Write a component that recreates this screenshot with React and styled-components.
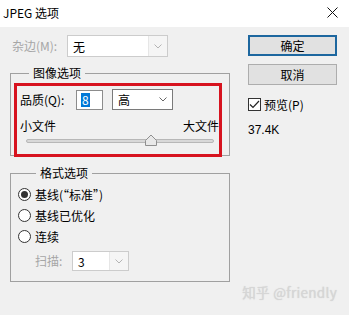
import React from "react";
import styled, { createGlobalStyle } from "styled-components";

const GlobalStyle = createGlobalStyle`
  html, body { margin: 0; padding: 0; background: #f0f0f0; }
  body { font-family: "Noto Sans CJK SC", "Noto Sans", sans-serif; font-size: 12px; color: #000; }
`;

const Window = styled.div`
  position: relative;
  width: 349px;
  height: 315px;
  background: #f0f0f0;
  overflow: hidden;
`;

const TitleBar = styled.div`
  height: 27px;
  background: #ffffff;
  display: flex;
  align-items: center;
  justify-content: space-between;
  padding: 0 11px 2px 3px;
  box-sizing: border-box;
  font-size: 12px;
`;

const Body = styled.div`
  display: flex;
  gap: 18px;
  padding: 8px 0 0 10px;
`;

const LeftCol = styled.div`
  width: 220px;
  display: flex;
  flex-direction: column;
`;

const RightCol = styled.div`
  width: 89px;
  display: flex;
  flex-direction: column;
`;

const Row = styled.div`
  display: flex;
  align-items: center;
  height: ${(p) => p.h || 21}px;
  margin-top: ${(p) => p.mt || 0}px;
  padding-left: ${(p) => p.pl || 0}px;
`;

const Label = styled.span`
  width: ${(p) => (p.w ? `${p.w}px` : "auto")};
  color: ${(p) => (p.disabled ? "#a6a6a6" : "#000")};
  line-height: 16px;
  white-space: nowrap;
`;

const Combo = styled.div`
  display: flex;
  width: ${(p) => p.w}px;
  height: ${(p) => p.h}px;
  box-sizing: border-box;
  border: 1px solid ${(p) => (p.disabled ? "#cccccc" : "#7a7a7a")};
  background: #ffffff;
  margin-left: ${(p) => p.ml || 0}px;
`;

const ComboField = styled.div`
  flex: 1;
  display: flex;
  align-items: center;
  padding-left: 5px;
  background: #ffffff;
  border-right: ${(p) => (p.disabled ? "1px solid #e6e6e6" : "none")};
`;

const ComboArrow = styled.div`
  width: 18px;
  display: flex;
  align-items: center;
  justify-content: center;
  background: ${(p) => (p.disabled ? "#f5f5f5" : "#ffffff")};
`;

const Chevron = ({ color }) => (
  <svg width="8" height="5" viewBox="0 0 8 5">
    <polyline points="0.5,0.5 4,4 7.5,0.5" fill="none" stroke={color} strokeWidth="1" />
  </svg>
);

const Select = ({ w, h, value, disabled, ml }) => (
  <Combo w={w} h={h} disabled={disabled} ml={ml}>
    <ComboField disabled={disabled}>{value}</ComboField>
    <ComboArrow disabled={disabled}>
      <Chevron color={disabled ? "#b4b4b4" : "#666"} />
    </ComboArrow>
  </Combo>
);

const Group = styled.fieldset`
  margin: ${(p) => p.mt || 0}px 0 0 0;
  padding: ${(p) => p.pad};
  border: 1px solid #a0a0a0;
  min-width: 0;
`;

const Legend = styled.legend`
  margin-left: 18px;
  padding: 0 4px;
  line-height: 16px;
  font-size: 12px;
`;

const RedFrame = styled.div`
  margin: 2px 7px -2px 3px;
  border: 3px solid #d7131f;
  padding: 3px 0 6px 3px;
  display: flex;
  flex-direction: column;
`;

const NumberBox = styled.div`
  width: 27px;
  height: 20px;
  box-sizing: border-box;
  border: 1px solid #8c8c8c;
  background: #fff;
  display: flex;
  align-items: center;
  padding-left: 4px;
`;

const Selected = styled.span`
  background: #0078d7;
  color: #fff;
  line-height: 14px;
  padding: 0 1px;
`;

const ScaleLabels = styled.div`
  display: flex;
  justify-content: space-between;
  line-height: 16px;
  margin-top: 8px;
`;

const Slider = styled.div`
  position: relative;
  height: 14px;
  margin: 0 5px 0 6px;
`;

const Track = styled.div`
  position: absolute;
  left: 0;
  right: 0;
  top: 5px;
  height: 4px;
  box-sizing: border-box;
  border: 1px solid #b7b7b7;
  background: #d8d8d8;
  border-radius: 2px;
`;

const Thumb = styled.svg`
  position: absolute;
  top: 0;
  margin-left: -6px;
`;

const RadioRow = styled.div`
  display: flex;
  align-items: center;
  height: 21px;
  gap: 4px;
`;

const RadioCircle = styled.span`
  width: 13px;
  height: 13px;
  box-sizing: border-box;
  border: 1px solid #333;
  border-radius: 50%;
  background: #fff;
  display: flex;
  align-items: center;
  justify-content: center;
  &::after {
    content: "";
    width: 7px;
    height: 7px;
    border-radius: 50%;
    background: ${(p) => (p.checked ? "#333" : "transparent")};
  }
`;

const Button = styled.div`
  height: 21px;
  box-sizing: border-box;
  border: ${(p) => (p.primary ? "2px solid #1d679f" : "1px solid #adadad")};
  background: #e1e1e1;
  display: flex;
  align-items: center;
  justify-content: center;
  margin-top: ${(p) => p.mt || 0}px;
`;

const CheckRow = styled.div`
  display: flex;
  align-items: center;
  gap: 3px;
  height: 16px;
  margin-top: 11px;
`;

const CheckBox = styled.span`
  width: 13px;
  height: 13px;
  box-sizing: border-box;
  border: 1px solid #333;
  background: #fff;
  display: flex;
  align-items: center;
  justify-content: center;
`;

const SizeText = styled.div`
  margin-top: 10px;
  line-height: 16px;
  font-family: "Liberation Sans", "Noto Sans CJK SC", sans-serif;
`;

const Watermark = styled.div`
  position: absolute;
  right: 12px;
  bottom: 13px;
  font-size: 13.5px;
  color: #d6d6d6;
  text-shadow: 0 0 1px rgba(150, 150, 150, 0.35);
  letter-spacing: 0.3px;
`;

const quality = 8;

export default function App() {
  const thumbPos = `${(quality / 12) * 100}%`;
  return (
    <Window>
      <GlobalStyle />
      <TitleBar>
        <span>JPEG 选项</span>
        <svg width="11" height="11" viewBox="0 0 11 11">
          <path d="M0.5 0.5 L10.5 10.5 M10.5 0.5 L0.5 10.5" stroke="#111" strokeWidth="1" />
        </svg>
      </TitleBar>
      <Body>
        <LeftCol>
          <Row h={22} pl={2}>
            <Label w={55} disabled>杂边(M):</Label>
            <Select w={101} h={22} value="无" disabled />
          </Row>

          <Group mt={8} pad="0">
            <Legend>图像选项</Legend>
            <RedFrame>
              <Row>
                <Label w={56}>品质(Q):</Label>
                <NumberBox>
                  <Selected>{quality}</Selected>
                </NumberBox>
                <Select w={61} h={21} value="高" ml={9} />
              </Row>
              <ScaleLabels>
                <span>小文件</span>
                <span>大文件</span>
              </ScaleLabels>
              <Slider>
                <Track />
                <Thumb width="12" height="12" viewBox="0 0 12 12" style={{ left: thumbPos }}>
                  <path d="M0.5 11.5 L0.5 6.5 L6 1 L11.5 6.5 L11.5 11.5 Z" fill="#e8e8e8" stroke="#8f8f8f" />
                </Thumb>
              </Slider>
            </RedFrame>
          </Group>

          <Group mt={9} pad="3px 0 10px 7px">
            <Legend>格式选项</Legend>
            <RadioRow>
              <RadioCircle checked />
              <span>基线(“标准”)</span>
            </RadioRow>
            <RadioRow>
              <RadioCircle />
              <span>基线已优化</span>
            </RadioRow>
            <RadioRow>
              <RadioCircle />
              <span>连续</span>
            </RadioRow>
            <Row h={20} mt={4} pl={17}>
              <Label w={37} disabled>扫描:</Label>
              <Select w={57} h={20} value="3" disabled />
            </Row>
          </Group>
        </LeftCol>

        <RightCol>
          <Button primary>确定</Button>
          <Button mt={8}>取消</Button>
          <CheckRow>
            <CheckBox>
              <svg width="11" height="9" viewBox="0 0 11 9">
                <polyline points="1,4.5 4,7.5 10,1" fill="none" stroke="#222" strokeWidth="1.2" />
              </svg>
            </CheckBox>
            <span>预览(P)</span>
          </CheckRow>
          <SizeText>37.4K</SizeText>
        </RightCol>
      </Body>
      <Watermark>知乎 @friendly</Watermark>
    </Window>
  );
}
